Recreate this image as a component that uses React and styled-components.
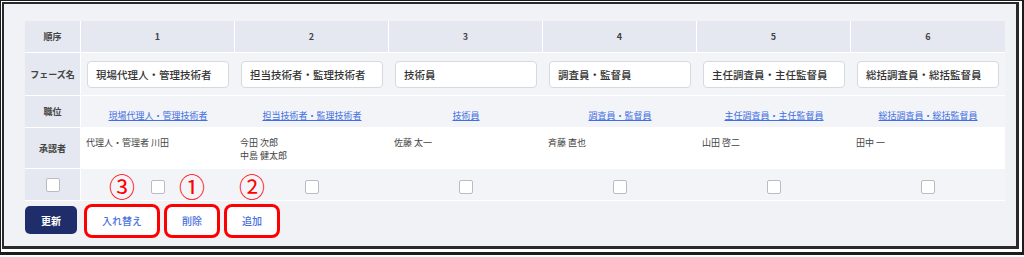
import React from "react";
import styled, { createGlobalStyle } from "styled-components";

const GlobalStyle = createGlobalStyle`
  html, body { margin: 0; padding: 0; background: #fff; }
  body { font-family: "Noto Sans CJK JP", "Noto Sans", sans-serif; }
  * { box-sizing: border-box; }
`;

const Frame = styled.div`
  width: 1024px;
  height: 255px;
  border: 1px solid #1c1c1c;
  border-right-width: 2px;
  border-bottom-width: 3px;
  padding: 1px 3px 3px 1px;
  background: #fff;
`;

const Panel = styled.div`
  height: 100%;
  border: 2px solid #2a2a2a;
  border-right-width: 3px;
  border-bottom-width: 3px;
  background: #f1f2f6;
  padding: 17px 0 0 21px;
`;

const Table = styled.table`
  width: 980px;
  table-layout: fixed;
  border-collapse: separate;
  border-spacing: 0;
`;

const Row = styled.tr``;

const LabelCell = styled.th`
  height: ${(p) => p.$h}px;
  padding: 0;
  background: #e5e8f0;
  border-right: 1px solid #fff;
  border-bottom: 1px solid #fff;
  font-size: 9px;
  font-weight: 700;
  color: #444;
  text-align: center;
  vertical-align: middle;
`;

const HeadCell = styled.th`
  height: ${(p) => p.$h}px;
  padding: 0;
  background: #e5e8f0;
  border-right: 1px solid #fff;
  border-bottom: 1px solid #fff;
  font-size: 9px;
  font-weight: 700;
  color: #444;
  text-align: center;
  vertical-align: middle;
  &:last-child { border-right: none; }
`;

const Cell = styled.td`
  height: ${(p) => p.$h}px;
  padding: ${(p) => p.$pad || "0"};
  background: ${(p) => (p.$white ? "#fff" : "#f3f4f8")};
  border-bottom: 1px solid #fff;
  text-align: ${(p) => p.$align || "center"};
  vertical-align: ${(p) => p.$valign || "middle"};
`;

const PhaseInput = styled.input`
  display: block;
  width: 100%;
  height: 27px;
  padding: 0 0 0 8px;
  border: 1px solid #d6d9df;
  border-radius: 4px;
  background: #fff;
  font-family: "Noto Sans CJK JP", "Noto Sans", sans-serif;
  font-size: 10.5px;
  font-weight: 500;
  color: #333;
  outline: none;
`;

const RoleLink = styled.a`
  font-size: 9px;
  color: #3f6fe0;
  text-decoration: underline;
  cursor: pointer;
`;

const Name = styled.div`
  font-size: 9px;
  line-height: 13px;
  color: #444;
`;

const Check = styled.span`
  display: inline-block;
  width: 14px;
  height: 14px;
  background: #fff;
  border: 1px solid #b9bcc3;
  border-radius: 2px;
  vertical-align: middle;
`;

const Actions = styled.div`
  display: flex;
  gap: 10px;
  margin-top: 5px;
`;

const ButtonWrap = styled.div`
  position: relative;
`;

const Button = styled.button`
  height: 28px;
  padding: 0 ${(p) => (p.$primary ? 16 : 15)}px;
  border: none;
  border-radius: 5px;
  background: ${(p) => (p.$primary ? "#1f2d6b" : "#fff")};
  color: ${(p) => (p.$primary ? "#fff" : "#4a70e0")};
  font-family: "Noto Sans CJK JP", "Noto Sans", sans-serif;
  font-size: 10px;
  font-weight: ${(p) => (p.$primary ? 700 : 500)};
  box-shadow: ${(p) => (p.$mark ? "0 0 0 3px #ff0000" : "none")};
  cursor: pointer;
`;

const Badge = styled.span`
  position: absolute;
  left: 50%;
  bottom: calc(100% + 7px);
  transform: translateX(-50%);
  font-size: 26px;
  line-height: 1;
  color: #ff0000;
  white-space: nowrap;
`;

const columns = [
  { n: 1, phase: "現場代理人・管理技術者", approvers: ["代理人・管理者 川田"] },
  { n: 2, phase: "担当技術者・監理技術者", approvers: ["今田 次郎", "中島 健太郎"] },
  { n: 3, phase: "技術員", approvers: ["佐藤 太一"] },
  { n: 4, phase: "調査員・監督員", approvers: ["斉藤 直也"] },
  { n: 5, phase: "主任調査員・主任監督員", approvers: ["山田 啓二"] },
  { n: 6, phase: "総括調査員・総括監督員", approvers: ["田中 一"] },
];

const actions = [
  { label: "入れ替え", badge: "③" },
  { label: "削除", badge: "①" },
  { label: "追加", badge: "②" },
];

export default function App() {
  return (
    <>
      <GlobalStyle />
      <Frame>
        <Panel>
          <Table>
            <colgroup>
              <col style={{ width: 56 }} />
              {columns.map((c) => (
                <col key={c.n} style={{ width: 154 }} />
              ))}
            </colgroup>
            <tbody>
              <Row>
                <LabelCell $h={32}>順序</LabelCell>
                {columns.map((c) => (
                  <HeadCell key={c.n} $h={32}>
                    {c.n}
                  </HeadCell>
                ))}
              </Row>
              <Row>
                <LabelCell $h={43}>フェーズ名</LabelCell>
                {columns.map((c) => (
                  <Cell key={c.n} $h={43} $pad="0 6px">
                    <PhaseInput readOnly value={c.phase} />
                  </Cell>
                ))}
              </Row>
              <Row>
                <LabelCell $h={32}>職位</LabelCell>
                {columns.map((c) => (
                  <Cell key={c.n} $h={32}>
                    <RoleLink>{c.phase}</RoleLink>
                  </Cell>
                ))}
              </Row>
              <Row>
                <LabelCell $h={41}>承認者</LabelCell>
                {columns.map((c) => (
                  <Cell
                    key={c.n}
                    $h={41}
                    $white
                    $align="left"
                    $valign="top"
                    $pad="8px 0 0 5px"
                  >
                    {c.approvers.map((a) => (
                      <Name key={a}>{a}</Name>
                    ))}
                  </Cell>
                ))}
              </Row>
              <Row>
                <LabelCell $h={32}>
                  <Check />
                </LabelCell>
                {columns.map((c) => (
                  <Cell key={c.n} $h={32}>
                    <Check />
                  </Cell>
                ))}
              </Row>
            </tbody>
          </Table>
          <Actions>
            <Button $primary>更新</Button>
            {actions.map((a) => (
              <ButtonWrap key={a.label}>
                <Badge>{a.badge}</Badge>
                <Button $mark>{a.label}</Button>
              </ButtonWrap>
            ))}
          </Actions>
        </Panel>
      </Frame>
    </>
  );
}
